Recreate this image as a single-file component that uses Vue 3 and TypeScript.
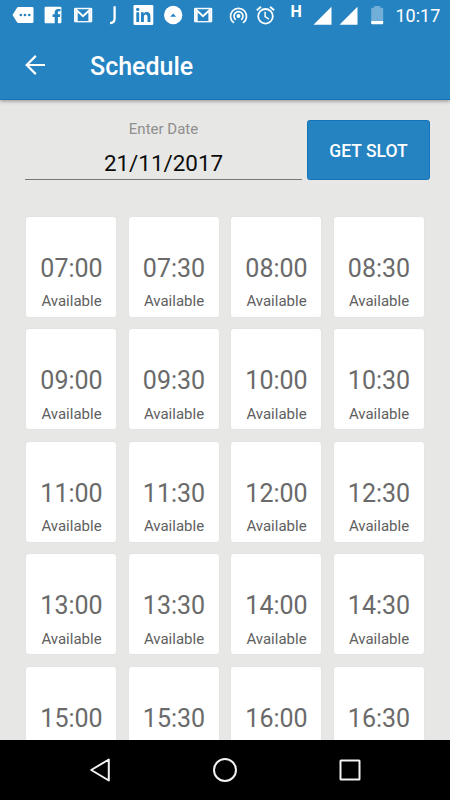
<script setup lang="ts">
import { ref } from 'vue'

interface Slot {
  time: string
  status?: string
}

const date = ref<string>('21/11/2017')

const slots: Slot[] = Array.from({ length: 20 }, (_, i) => {
  const hour = String(7 + Math.floor(i / 2)).padStart(2, '0')
  return {
    time: `${hour}:${i % 2 ? '30' : '00'}`,
    status: i < 16 ? 'Available' : undefined,
  }
})
</script>

<template>
  <div class="screen">
    <header class="top">
      <div class="status">
        <div class="notifications">
          <svg viewBox="0 0 30 30">
            <path fill="#fff" d="M10.500 7H24.200a1.300 1.300 0 0 1 1.300 1.300v13.400a1.300 1.300 0 0 1-1.300 1.300H10.500a2 2 0 0 1-1.600-.9L4.500 15l4.400-7.100a2 2 0 0 1 1.600-.9z" />
            <g fill="#2583c1"><circle cx="12.800" cy="15" r="1.300" /><circle cx="17" cy="15" r="1.300" /><circle cx="21.300" cy="15" r="1.300" /></g>
          </svg>
          <svg viewBox="0 0 30 30">
            <path fill="#fff" d="M7.500 6.800h15a.9.9 0 0 1 .9.9v14.600a.9.9 0 0 1-.9.9h-2.600v-6.100h2l.4-2.800h-2.400v-1.700c0-.9.3-1.300 1.400-1.300h1.200V8.900h-2.200c-2.400 0-3.600 1.300-3.600 3.400v2h-2.100v2.800h2.100v6.100H7.500a.9.9 0 0 1-.9-.9V7.700a.9.9 0 0 1 .9-.9z" />
          </svg>
          <svg viewBox="0 0 30 30">
            <rect x="6" y="7.800" width="18.300" height="14.500" rx="1.400" fill="#d6e8f5" />
            <path fill="#2583c1" d="M8.300 9.200h13.400v12H8.300z" />
            <path fill="none" stroke="#fff" stroke-width="2" d="M8.700 21V10.300L15 16.200l6.400-5.900V21" />
            <path fill="none" stroke="#fff" stroke-width="1" d="M6.700 8.600h16.800v13.100H6.700z" />
          </svg>
          <svg viewBox="0 0 30 30">
            <path fill="none" stroke="#fff" stroke-width="2.300" d="M16.600 6.200v12.200c0 3.200-1.200 4.500-4.500 4.600" />
          </svg>
          <svg viewBox="0 0 30 30">
            <rect x="5.500" y="5" width="19.800" height="20" rx="1.200" fill="#fff" />
            <path fill="#2583c1" d="M8.300 12.300h2.900V22H8.300zM13 12.300h2.700v1.400c.6-1 1.600-1.600 2.900-1.600 2.800 0 3.800 1.700 3.800 4.500V22h-2.900v-5c0-1.500-.5-2.500-1.700-2.500-1.400 0-1.900 1-1.900 2.500v5H13z" />
            <circle cx="9.700" cy="9.400" r="1.700" fill="#2583c1" />
          </svg>
          <svg viewBox="0 0 30 30">
            <circle cx="15.200" cy="15" r="9.200" fill="#fff" />
            <path fill="#2583c1" d="M12.200 16.700l3-3.200 3 3.200z" />
          </svg>
          <svg viewBox="0 0 30 30">
            <rect x="6" y="7.800" width="18.300" height="14.500" rx="1.400" fill="#d6e8f5" />
            <path fill="#2583c1" d="M8.300 9.200h13.400v12H8.300z" />
            <path fill="none" stroke="#fff" stroke-width="2" d="M8.700 21V10.300L15 16.200l6.400-5.900V21" />
            <path fill="none" stroke="#fff" stroke-width="1" d="M6.700 8.600h16.800v13.100H6.700z" />
          </svg>
        </div>
        <div class="system">
          <svg class="narrow" viewBox="0 0 27 30">
            <g fill="none" stroke="#fff" stroke-width="1.700">
              <path d="M9 22.900a8 8 0 1 1 9 0" />
              <path d="M10.800 19.700a4.500 4.500 0 1 1 5.400 0" />
            </g>
            <circle cx="13.500" cy="16" r="2" fill="#fff" />
          </svg>
          <svg class="narrow" viewBox="0 0 27 30">
            <g fill="none" stroke="#fff" stroke-width="1.800">
              <circle cx="13.500" cy="16.300" r="7.300" />
              <path d="M4.800 10.300l4.200-3.600M22.200 10.300L18 6.700" />
              <path stroke-width="1.500" d="M13.100 11.800v4.900l3.800 2.400" />
            </g>
          </svg>
          <span class="network">H</span>
          <svg class="signal" viewBox="0 0 26 30"><path fill="#fff" d="M21.500 6.800v18H3.500z" /></svg>
          <svg class="signal" viewBox="0 0 26 30"><path fill="#fff" d="M21.500 6.800v18H3.500z" /></svg>
          <svg class="battery" viewBox="0 0 27 30">
            <path fill="#71aed8" d="M10.200 6h6v1.800h2.200a.8.8 0 0 1 .8.8V21h-12V8.600a.8.8 0 0 1 .8-.8h2.200z" />
            <path fill="#fff" d="M7.200 21h12v2.400a.8.8 0 0 1-.8.8H8a.8.8 0 0 1-.8-.8z" />
          </svg>
          <span class="clock">10:17</span>
        </div>
      </div>
      <div class="toolbar">
        <svg class="back" viewBox="0 0 24 24"><path fill="none" stroke="#fff" stroke-width="2.200" d="M22 12H4M12.800 2.900L3.700 12l9.100 9.100" /></svg>
        <h1>Schedule</h1>
      </div>
    </header>

    <main>
      <div class="form">
        <label class="field">
          <span class="caption">Enter Date</span>
          <span class="value">{{ date }}</span>
        </label>
        <button type="button">GET SLOT</button>
      </div>
      <section class="slots">
        <article v-for="slot in slots" :key="slot.time" class="slot">
          <span class="time">{{ slot.time }}</span>
          <span v-if="slot.status" class="state">{{ slot.status }}</span>
        </article>
      </section>
    </main>

    <nav>
      <svg viewBox="0 0 30 30"><path d="M23.800 4.500v21L6.200 15z" /></svg>
      <svg viewBox="0 0 30 30"><circle cx="15" cy="15" r="11" /></svg>
      <svg viewBox="0 0 30 30"><rect x="5.500" y="5.500" width="19" height="19" rx=".5" /></svg>
    </nav>
  </div>
</template>

<style>
body {
  margin: 0;
}
</style>

<style scoped>
.screen {
  display: flex;
  flex-direction: column;
  width: 450px;
  height: 800px;
  overflow: hidden;
  background: #e7e7e5;
  font-family: Roboto, sans-serif;
}
.top {
  flex: none;
  box-sizing: border-box;
  height: 100px;
  background: #2583c1;
  border-bottom: 1px solid #1275ba;
  box-shadow: 0 1px 4px rgba(0, 0, 0, 0.4);
  color: #fff;
  z-index: 1;
}
.status {
  display: flex;
  height: 30px;
  padding-left: 7.5px;
}
.status svg {
  flex: none;
  width: 30px;
  height: 30px;
}
.notifications,
.system {
  display: flex;
}
.system {
  margin-left: 7px;
}
.status .narrow {
  width: 27px;
}
.network {
  width: 31px;
  padding-left: 12px;
  box-sizing: border-box;
  font-size: 16px;
  font-weight: 700;
  line-height: 23px;
}
.status .signal {
  width: 26px;
}
.status .battery {
  width: 27px;
  margin-left: 2.5px;
}
.clock {
  margin-left: 4.5px;
  font-size: 18px;
  line-height: 32px;
}
.toolbar {
  display: flex;
  align-items: center;
  height: 70px;
  padding-left: 23px;
}
.back {
  width: 24px;
  height: 24px;
}
h1 {
  margin: 3px 0 0 43px;
  font-size: 25px;
  font-weight: 500;
  line-height: 30px;
}
main {
  flex: 1;
  min-height: 0;
  overflow: hidden;
}
.form {
  display: flex;
  gap: 5px;
  padding: 20px 20px 0 25px;
}
.field {
  display: flex;
  flex-direction: column;
  width: 277px;
  height: 60px;
  box-sizing: border-box;
  border-bottom: 1px solid #777;
  text-align: center;
}
.caption {
  color: #8f8f8e;
  font-size: 15px;
  line-height: 18px;
}
.value {
  margin-top: 12px;
  color: #0c0c0c;
  font-size: 22.4px;
  line-height: 26px;
}
button {
  flex: 1;
  height: 60px;
  padding: 2px 0 0;
  border: 1px solid #1275ba;
  border-radius: 2.5px;
  background: #2583c1;
  color: #fff;
  font: 500 17.5px Roboto, sans-serif;
}
.slots {
  display: grid;
  grid-template-columns: repeat(4, 90px);
  grid-auto-rows: 100px;
  gap: 12.5px;
  padding: 36.500px 0 0 26px;
}
.slot {
  display: flex;
  flex-direction: column;
  align-items: center;
  box-sizing: border-box;
  padding-left: 1px;
  border-radius: 2.5px;
  background: #fff;
  box-shadow: 0 0 1px rgba(0, 0, 0, 0.12);
}
.time {
  margin-top: 37px;
  color: #6a6a6a;
  font-size: 25px;
  line-height: 30px;
}
.state {
  margin-top: 8.500px;
  color: #606060;
  font-size: 15px;
  line-height: 18px;
}
nav {
  display: flex;
  flex: none;
  align-items: center;
  justify-content: center;
  gap: 95px;
  height: 60px;
  background: #000;
}
nav svg {
  width: 30px;
  height: 30px;
  fill: none;
  stroke: #f2f2f2;
  stroke-width: 2;
  stroke-linejoin: round;
}
</style>
